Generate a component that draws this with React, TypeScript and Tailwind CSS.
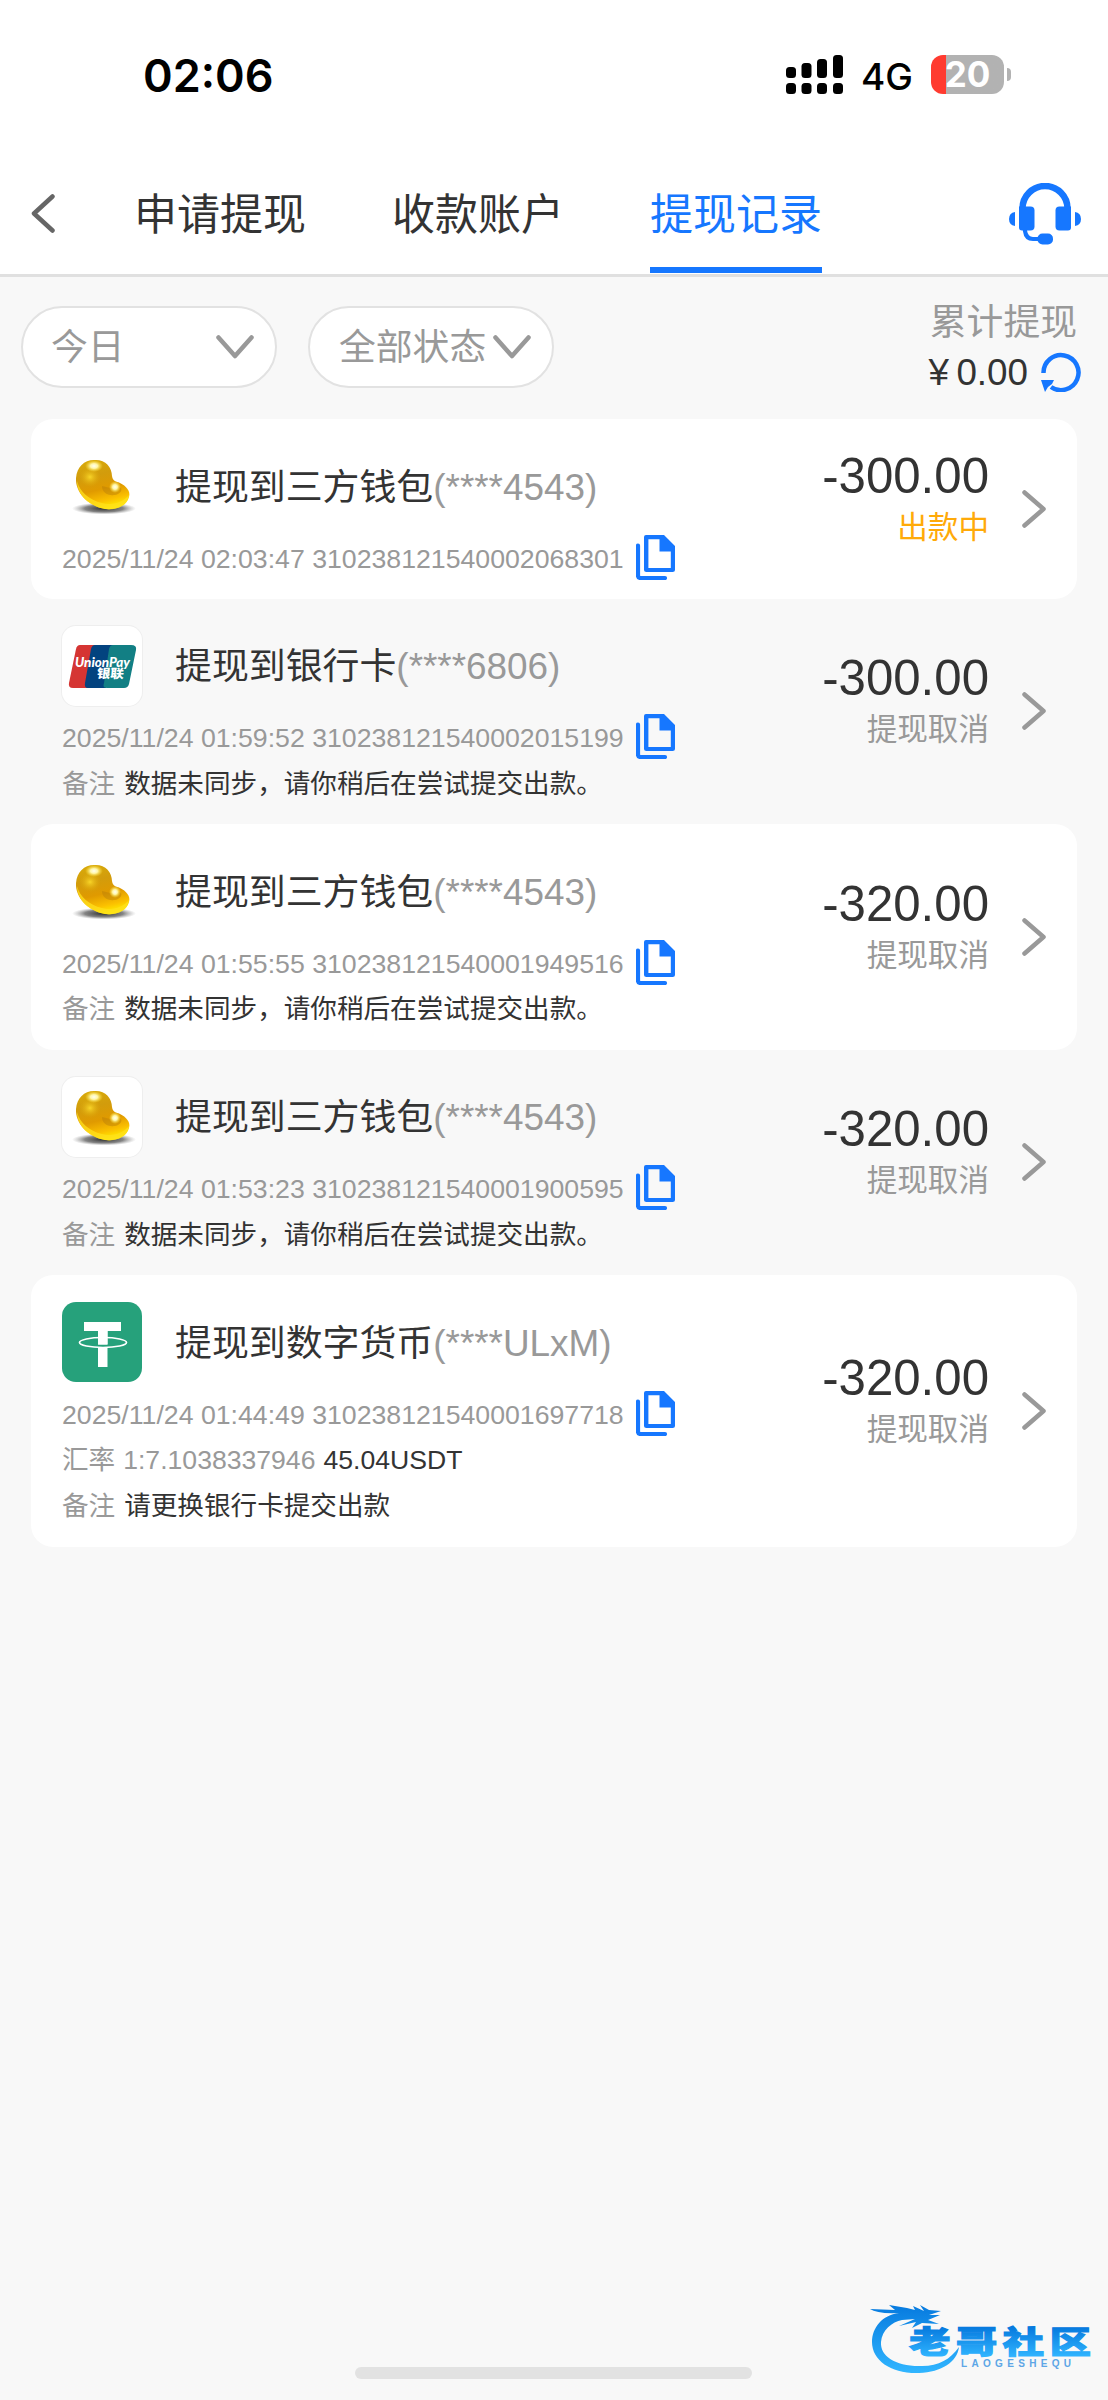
import type { ReactNode } from 'react';

const CopyIcon = () => (
  <svg className="mb-[2px] ml-[12px] h-[45px] w-[39px] shrink-0" viewBox="0 0 39 45" fill="none">
    <path d="M2 10.500v30q0 2.500 2.500 2.500H29" stroke="#1677ff" strokeWidth="4.200" strokeLinecap="round" />
    <path fillRule="evenodd" fill="#1677ff" d="M10 0H28L39 11V34.500Q39 37 36.500 37H10.500Q8 37 8 34.500V2Q8 0 10 0ZM12.400 4.200V33H34.800V16.500H23.500V4.200Z" />
  </svg>
);

const Chevron = ({ className, d, box }: { className: string; d: string; box: string }) => (
  <svg className={className} viewBox={box} fill="none" stroke="currentColor" strokeWidth="4.500" strokeLinecap="round" strokeLinejoin="round">
    <path d={d} />
  </svg>
);

const BeanIcon = () => (
  <svg className="size-[80px]" viewBox="0 0 80 80">
    <defs>
      <linearGradient id="bean" x1="0.3" y1="0" x2="0.55" y2="1">
        <stop offset="0" stopColor="#d8a90a" />
        <stop offset="0.3" stopColor="#d29c0c" />
        <stop offset="0.6" stopColor="#e09a00" />
        <stop offset="0.83" stopColor="#fbc000" />
        <stop offset="1" stopColor="#fff000" />
      </linearGradient>
      <radialGradient id="glow">
        <stop offset="0" stopColor="#fffef0" />
        <stop offset="0.4" stopColor="#fff6a8" />
        <stop offset="1" stopColor="#ffe230" stopOpacity="0" />
      </radialGradient>
      <radialGradient id="core">
        <stop offset="0" stopColor="#f8d528" />
        <stop offset="1" stopColor="#dca90b" stopOpacity="0" />
      </radialGradient>
      <radialGradient id="shade">
        <stop offset="0" stopColor="#222" stopOpacity="0.95" />
        <stop offset="0.6" stopColor="#444" stopOpacity="0.65" />
        <stop offset="1" stopColor="#888" stopOpacity="0" />
      </radialGradient>
    </defs>
    <ellipse cx="42" cy="62.500" rx="32" ry="6" fill="url(#shade)" />
    <path d="M32 14C43 13 50 21 50 30C51 36 54 35 58 37C64 40 69 45 67 51C65 60 54 64 43 63C26 60 13 46 14 32C15 21 22 14 32 14Z" fill="url(#bean)" />
    <path d="M15 35C18 46 27 54 40 57C51 60 61 56 67 49C66 59 55 65 43 63C27 60 15 49 15 35Z" fill="#ffe01c" opacity="0.75" />
    <path d="M40 40C47 42 52 43 58 41C61 43 59 48 53 49C45 50 40 46 40 40Z" fill="#b97f08" opacity="0.45" />
    <ellipse cx="28" cy="31" rx="11" ry="10" fill="url(#core)" />
    <ellipse cx="32" cy="20" rx="9" ry="6" fill="url(#glow)" />
    <ellipse cx="53" cy="41" rx="6" ry="6" fill="url(#glow)" />
  </svg>
);

const UnionPayIcon = () => (
  <svg className="size-[80px]" viewBox="0 0 80 80">
    <path d="M18 19H34L27 62H11Q6 62 7 57L14 23Q15 19 18 19Z" fill="#d53533" />
    <path d="M33 19H52L44 62H26Q22 62 23 57L29 23Q30 19 33 19Z" fill="#03437f" />
    <path d="M51 19H69Q75 19 74 24L67 58Q66 62 62 62H45Q40 62 42 57L47 23Q48 19 51 19Z" fill="#127f84" />
    <text x="13" y="40.500" fontFamily="Lato, sans-serif" fontWeight="900" fontStyle="italic" fontSize="14" textLength="55" lengthAdjust="spacingAndGlyphs" fill="#fff">UnionPay</text>
    <text x="35.500" y="52.500" fontFamily="'Noto Sans CJK SC', sans-serif" fontWeight="900" fontSize="12.500" textLength="27" lengthAdjust="spacingAndGlyphs" fill="#fff" transform="skewX(-5) translate(3.500 0)">银联</text>
  </svg>
);

const TetherIcon = () => (
  <svg className="size-[80px]" viewBox="0 0 80 80">
    <rect width="80" height="80" fill="#26a17b" />
    <path d="M22 20H59V29H45.500V42.500H36V29H22ZM36 45.500H45.500V65H36Z" fill="#fff" />
    <ellipse cx="41" cy="40.500" rx="23.500" ry="5" fill="none" stroke="#fff" strokeWidth="1.700" />
    <path d="M36 29H45.500V42.500H36Z" fill="#fff" />
  </svg>
);

type Kind = 'bean' | 'union' | 'tether';
const icons: Record<Kind, ReactNode> = { bean: <BeanIcon />, union: <UnionPayIcon />, tether: <TetherIcon /> };

interface RecordItem {
  kind: Kind;
  title: string;
  account: string;
  time: string;
  amount: string;
  status: string;
  pending?: boolean;
  rate?: [string, string];
  note?: string;
}

const sync = '数据未同步，请你稍后在尝试提交出款。';
const records: RecordItem[] = [
  { kind: 'bean', title: '提现到三方钱包', account: '(****4543)', time: '2025/11/24 02:03:47 310238121540002068301', amount: '-300.00', status: '出款中', pending: true },
  { kind: 'union', title: '提现到银行卡', account: '(****6806)', time: '2025/11/24 01:59:52 310238121540002015199', amount: '-300.00', status: '提现取消', note: sync },
  { kind: 'bean', title: '提现到三方钱包', account: '(****4543)', time: '2025/11/24 01:55:55 310238121540001949516', amount: '-320.00', status: '提现取消', note: sync },
  { kind: 'bean', title: '提现到三方钱包', account: '(****4543)', time: '2025/11/24 01:53:23 310238121540001900595', amount: '-320.00', status: '提现取消', note: sync },
  { kind: 'tether', title: '提现到数字货币', account: '(****ULxM)', time: '2025/11/24 01:44:49 310238121540001697718', amount: '-320.00', status: '提现取消', rate: ['1:7.1038337946', '45.04USDT'], note: '请更换银行卡提交出款' },
];

const Row = ({ item, index }: { item: RecordItem; index: number }) => (
  <li className={`flex items-center justify-between rounded-[22px] pt-[27px] pr-[31px] pb-[18px] pl-[31px] ${index % 2 === 0 ? 'bg-white' : ''}`}>
    <div>
      <div className="flex h-[80px] items-center">
        <div className={`size-[80px] overflow-hidden rounded-[14px] bg-white ${index % 2 === 1 ? 'ring-1 ring-[#eeeeee]' : ''}`}>{icons[item.kind]}</div>
        <p className="ml-[33px] pt-[4px] text-[36.900px] leading-none whitespace-nowrap text-[#333]">
          {item.title}<span className="text-[#999]">{item.account}</span>
        </p>
      </div>
      <div className="mt-[9.500px] flex h-[45px] items-center text-[26.680px] whitespace-nowrap text-[#999]">
        <span className="pt-[2px]">{item.time}</span>
        <CopyIcon />
      </div>
      {item.rate && (
        <p className="flex h-[46px] items-center gap-[8px] pt-[3px] text-[26.600px] whitespace-nowrap text-[#999]">
          <span>汇率</span><span>{item.rate[0]}</span><span className="text-[#333]">{item.rate[1]}</span>
        </p>
      )}
      {item.note && (
        <p className="flex h-[46px] items-center gap-[9px] pt-[3px] text-[26.600px] whitespace-nowrap text-[#999]">
          <span>备注</span><span className="text-[#333]">{item.note}</span>
        </p>
      )}
    </div>
    <div className="-mt-[9px] flex items-center">
      <div className="mr-[33px] flex flex-col items-end pb-[18px]">
        <span className="text-[49.200px] leading-[54px] text-[#333]">{item.amount}</span>
        <span className={`pt-[1px] text-[30.600px] leading-[47px] ${item.pending ? 'text-[#ffaa09]' : 'text-[#999]'}`}>{item.status}</span>
      </div>
      <Chevron className="h-[38px] w-[24px] text-[#999]" box="0 0 24 38" d="M2.500 2.500L21.500 19L2.500 35.500" />
    </div>
  </li>
);

const StatusBar = () => (
  <div className="flex h-[150px] items-start justify-between pr-[97px] pl-[143px] font-['Inter',sans-serif] text-black">
    <span className="mt-[48px] text-[45px] leading-[56px] font-semibold">02:06</span>
    <div className="mt-[55px] flex items-center">
      <svg className="h-[39px] w-[57px]" viewBox="0 0 57 39">
        <rect x="0" y="12" width="10" height="11" rx="3.500" /><rect x="15.500" y="8" width="10" height="15" rx="3.500" />
        <rect x="31" y="4" width="10" height="19" rx="3.500" /><rect x="47" y="0" width="10" height="23" rx="3.500" />
        <rect x="0" y="28" width="10" height="11" rx="3.500" /><rect x="15.500" y="28" width="10" height="11" rx="3.500" />
        <rect x="31" y="28" width="10" height="11" rx="3.500" /><rect x="47" y="28" width="10" height="11" rx="3.500" />
      </svg>
      <span className="mt-[4px] ml-[18px] w-[70px] text-[37px] leading-[35px] font-medium">4G</span>
      <div className="flex h-[39px] w-[73px] items-center justify-center rounded-[12px] bg-linear-to-r from-[#ff3b30] from-[20%] to-[#b2b2b2] to-[20%] text-[35px] leading-none font-bold text-white">20</div>
      <span className="ml-[3px] h-[13px] w-[4px] rounded-r-full bg-[#b2b2b2]" />
    </div>
  </div>
);

const Headset = () => (
  <svg className="h-[62px] w-[72px]" viewBox="0 0 72 62" fill="#1677ff">
    <path d="M13.500 28V25.500A22.500 22.500 0 0 1 58.500 25.500V28" fill="none" stroke="#1677ff" strokeWidth="6.500" />
    <path d="M10 23.500H21.500Q25.500 23.500 25.500 27.500V43.500Q25.500 47.500 21.500 47.500H13Q10 47.500 10 44.500Z" />
    <path d="M62 23.500H50.500Q46.500 23.500 46.500 27.500V43.500Q46.500 47.500 50.500 47.500H59Q62 47.500 62 44.500Z" />
    <path d="M6 29V43Q0 42 0 36Q0 30 6 29ZM66 29V43Q72 42 72 36Q72 30 66 29Z" />
    <path d="M16 46V48Q17 56 24 56H32" fill="none" stroke="#1677ff" strokeWidth="4.200" />
    <rect x="28.500" y="50.500" width="15.500" height="11" rx="5" />
  </svg>
);

const tabs = ['申请提现', '收款账户', '提现记录'];

export default function App() {
  return (
    <div className="relative h-[2400px] w-[1108px] overflow-hidden bg-[#f8f8f8] font-['Liberation_Sans','Noto_Sans_CJK_SC',sans-serif]">
      <header className="h-[277px] border-b-3 border-[#e0e0e0] bg-white">
        <StatusBar />
        <nav className="flex h-[124px] items-start pl-[31px]">
          <Chevron className="mt-[44px] h-[39px] w-[24px] text-[#666]" box="0 0 24 39" d="M21.500 2.500L3 19.500L21.500 36.500" />
          <div className="ml-[79px] flex gap-[86px]">
            {tabs.map((tab, i) => (
              <button key={tab} className={`flex h-[123px] items-start border-b-6 pt-[44px] text-[43px] leading-none ${i === 2 ? 'border-[#1677ff] text-[#1677ff]' : 'border-transparent text-[#333]'}`}>{tab}</button>
            ))}
          </div>
          <div className="mt-[33px] ml-[187px]"><Headset /></div>
        </nav>
      </header>

      <section className="flex h-[142px] items-start pt-[29px] pl-[21px] text-[36.800px] leading-none text-[#999]">
        <button className="flex h-[82px] w-[256px] items-center justify-between rounded-full border-2 border-[#e2e2e2] bg-white pr-[21px] pl-[28px]">
          <span className="pt-[3px]">今日</span><Chevron className="h-[24px] w-[38px]" box="0 0 38 24" d="M2.500 2.500L19 21L35.500 2.500" />
        </button>
        <button className="ml-[31px] flex h-[82px] w-[246px] items-center justify-between rounded-full border-2 border-[#e2e2e2] bg-white pr-[21px] pl-[29px] whitespace-nowrap">
          <span className="pt-[3px]">全部状态</span><Chevron className="h-[24px] w-[38px] shrink-0" box="0 0 38 24" d="M2.500 2.500L19 21L35.500 2.500" />
        </button>
        <div className="mr-[27px] ml-auto flex flex-col items-end">
          <span className="mt-[1px] mr-[4px] leading-[32px]">累计提现</span>
          <div className="mt-[13px] flex h-[40px] items-center text-[#333]">
            <span className="w-[28px] pt-[2px]">¥</span><span className="pt-[2px]">0.00</span>
            <svg className="ml-[13px] size-[40px]" viewBox="0 0 40 40" fill="none">
              <path d="M2.500 21A17.500 17.500 0 1 1 10 35" stroke="#1677ff" strokeWidth="4.500" />
              <path d="M0 28H13L11 32L7 35L4 40Z" fill="#1677ff" />
            </svg>
          </div>
        </div>
      </section>

      <ul className="mx-[31px]">
        {records.map((item, i) => <Row key={item.time} item={item} index={i} />)}
      </ul>

      <div className="absolute bottom-[21px] left-[355px] h-[12px] w-[397px] rounded-full bg-[#e2e2e2]" />

      <div className="absolute top-[2300px] left-[868px] h-[76px] w-[236px]">
        <svg className="size-full overflow-visible" viewBox="0 0 236 76">
          <defs>
            <linearGradient id="wm" gradientUnits="userSpaceOnUse" x1="0" y1="6" x2="0" y2="72">
              <stop offset="0" stopColor="#077bdf" /><stop offset="1" stopColor="#30b5ff" />
            </linearGradient>
            <linearGradient id="wmText" gradientUnits="userSpaceOnUse" x1="0" y1="28" x2="0" y2="57">
              <stop offset="0" stopColor="#077bdf" /><stop offset="1" stopColor="#30b5ff" />
            </linearGradient>
          </defs>
          <path fill="url(#wm)" d="M31 13C14 15 4 28 4 42C4 61 24 74 51 73C74 72 89 62 91 47C82 60 69 67 51 66C27 66 12 56 13 42C14 30 24 22 34 20L47 19L31 26L48 22L44 28L54 23L71 24L60 20L72 15L61 15L73 11L61 10L52 5L56 11L45 6L47 10L39 8L21 5L27 10L2 9Q9 14 31 13Z" />
          <text x="30.500" y="53" transform="scale(1.35 1)" fontFamily="'Noto Sans CJK SC', sans-serif" fontWeight="900" fontSize="30.500" letterSpacing="4.200" fill="url(#wmText)" stroke="url(#wmText)" strokeWidth="1.200">老哥社区</text>
          <text x="93" y="66.500" fontFamily="'Liberation Sans', sans-serif" fontWeight="700" fontSize="10" textLength="110" lengthAdjust="spacing" fill="#5da6e6">LAOGESHEQU</text>
        </svg>
      </div>
    </div>
  );
}
